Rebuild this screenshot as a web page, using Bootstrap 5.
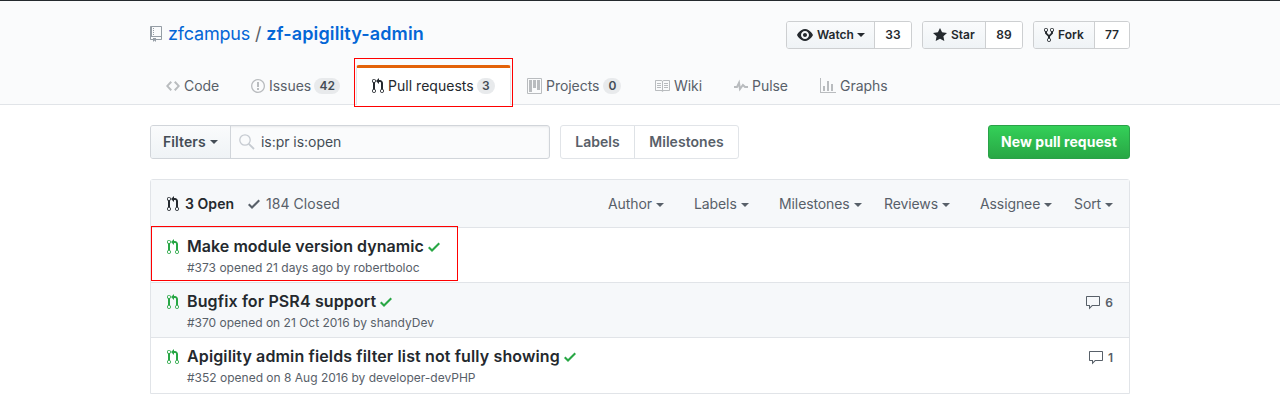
<!DOCTYPE html>
<html lang="en">
<head>
<meta charset="utf-8">
<meta name="viewport" content="width=device-width, initial-scale=1">
<title>Pull requests · zfcampus/zf-apigility-admin</title>
<link href="https://cdn.jsdelivr.net/npm/bootstrap@5.3.0/dist/css/bootstrap.min.css" rel="stylesheet">
<style>
body{font:14px/21px Inter,"Liberation Sans",sans-serif;color:#24292e;letter-spacing:-.04px;overflow:hidden;background:#fff}
svg{fill:currentColor;display:block;flex:none}
a{text-decoration:none;color:inherit}
.page{width:980px;margin:0 auto}
.pagehead{background:#fafbfc;border-top:1px solid #24292e;border-bottom:1px solid #e1e4e8;height:105px}
.title-row{height:64px}
.repo-title{font-size:18px;line-height:28px;color:#586069;padding-top:3px;letter-spacing:-.18px}
.repo-title a{color:#0366d6}
.repo-title strong{font-weight:600;letter-spacing:.13px}
.repo-title svg{color:#959da5;margin-right:6px}
.social{gap:10px;padding-top:20px}
.social .btn-group{height:28px;border:1px solid #cdcfd1;border-radius:3px;overflow:hidden;font-size:12px;font-weight:600;line-height:26px;letter-spacing:0}
.social .act{background:linear-gradient(#fafbfc,#eff3f6);padding-left:10px}
.social .cnt{background:#fff;border-left:1px solid #cdcfd1;text-align:center}
.caret{display:inline-block;border:4px solid transparent;border-top-color:currentColor;border-bottom:0;margin-left:4px;vertical-align:middle}
.tabs{height:39px}
.tabs a{height:40px;padding:0 0 2px 15px;color:#586069;border:1px solid transparent;border-top:3px solid transparent;border-bottom:0}
.tabs svg{color:#b9bcbf}
.tabs .current{background:#fff;color:#24292e;border-color:#e36209 #e1e4e8 transparent;border-radius:3px 3px 0 0;letter-spacing:.03px}
.tabs .current svg{color:#24292e}
.pill{font-size:12px;font-weight:600;line-height:16px;height:16px;border-radius:20px;background:#e8eaec;color:#444d56;text-align:center;margin:1px 0 0 3px;letter-spacing:0}
.tools{margin-top:20px;height:34px}
.tools>div{border-radius:3px}
.search{width:400px;border:1px solid #d1d5da;background:#fafbfc;overflow:hidden;box-shadow:inset 0 1px 2px rgba(27,31,35,.075)}
.search b{width:80px;font-weight:600;color:#444d56;background:linear-gradient(#fafbfc,#eff3f6);border-right:1px solid #d1d5da;padding:0 0 1px 12px;letter-spacing:.1px}
.links{margin-left:10px;border:1px solid #e1e4e8;font-weight:600;color:#586069;width:179px;letter-spacing:.04px}
.links a{padding-bottom:2px}
.new-pr{width:142px;background:linear-gradient(#34d058,#28a745);border:1px solid #2aa148;color:#fff;font-weight:700;padding-bottom:2px;letter-spacing:.05px}
.issues{margin-top:20px;border:1px solid #e1e4e8;border-radius:3px 3px 0 0;height:215px}
.head-row{height:48px;background:#f6f8fa;border-bottom:1px solid #e1e4e8;color:#586069;padding-left:16px}
.filters{letter-spacing:-.1px}
.issue{height:55px;border-bottom:1px solid #e1e4e8;padding:7px 16px 0}
.issue:last-of-type{border-bottom:0}
.issue.alt{background:#f6f8fa}
.issue .pr{color:#28a745;margin:4px 8px 0 0}
.issue h4{font-size:16px;line-height:22px;font-weight:600;margin:0;letter-spacing:.13px}
.issue h4 svg{color:#28a745;margin-top:2px}
.issue:first-of-type h4{letter-spacing:.04px}
.issue p{font-size:12px;line-height:18px;color:#586069;margin:2px 0 0;letter-spacing:0}
.talk{color:#586069;font-size:12px;font-weight:600;gap:4px;height:22px;margin-top:1px}
.talk svg{margin-top:2px}
.marker{border:1px solid #f00;position:absolute;pointer-events:none}
</style>
</head>
<body>
<svg class="d-none">
<symbol id="pr" viewBox="0 0 12 16"><path fill-rule="evenodd" d="M11 11.28V5c-.03-.78-.34-1.47-.94-2.06C9.46 2.35 8.78 2.03 8 2H7V0L4 3l3 3V4h1c.27.02.48.11.69.31.21.2.3.42.31.69v6.28A1.993 1.993 0 0 0 10 15a1.993 1.993 0 0 0 1-3.72zm-1 2.92c-.66 0-1.2-.55-1.2-1.2 0-.65.55-1.2 1.2-1.2.65 0 1.2.55 1.2 1.2 0 .65-.55 1.2-1.2 1.2zM4 3c0-1.11-.89-2-2-2a1.993 1.993 0 0 0-1 3.72v6.56A1.993 1.993 0 0 0 2 15a1.993 1.993 0 0 0 1-3.72V4.72c.59-.34 1-.98 1-1.72zm-.8 10c0 .66-.55 1.2-1.2 1.2-.65 0-1.2-.55-1.2-1.2 0-.65.55-1.2 1.2-1.2.65 0 1.2.55 1.2 1.2zM2 4.2C1.34 4.2.8 3.65.8 3c0-.65.55-1.2 1.2-1.2.65 0 1.2.55 1.2 1.2 0 .65-.55 1.2-1.2 1.2z"/></symbol>
<symbol id="check" viewBox="0 0 12 16"><path d="M12 5l-8 8-4-4 1.5-1.5L4 10l6.5-6.5z"/></symbol>
<symbol id="talk" viewBox="0 0 16 16"><path fill-rule="evenodd" d="M14 1H2c-.55 0-1 .45-1 1v8c0 .55.45 1 1 1h2v3.5L7.5 11H14c.55 0 1-.45 1-1V2c0-.55-.45-1-1-1zm0 9H7l-2 2v-2H2V2h12v8z"/></symbol>
</svg>
<header class="pagehead">
<div class="page position-relative">
<div class="title-row d-flex justify-content-between align-items-start">
<div class="repo-title d-flex align-items-center mt-3"><svg width="12" height="16" viewBox="0 0 12 16"><path fill-rule="evenodd" d="M4 9H3V8h1v1zm0-3H3v1h1V6zm0-2H3v1h1V4zm0-2H3v1h1V2zm8-1v12c0 .55-.45 1-1 1H6v2l-1.500-1.500L3 16v-2H1c-.55 0-1-.45-1-1V1c0-.55.45-1 1-1h10c.55 0 1 .45 1 1zm-1 10H1v2h2v-1h3v1h5v-2zm0-10H2v9h9V1z"/></svg><div><a href="#" class="owner">zfcampus</a> <span>/</span> <a href="#"><strong>zf-apigility-admin</strong></a></div></div>
<div class="social d-flex">
<div class="btn-group"><div class="act d-flex align-items-center" style="width:87px"><svg width="16" height="16" viewBox="0 0 16 16"><path fill-rule="evenodd" d="M8.060 2C3 2 0 8 0 8s3 6 8.060 6C13 14 16 8 16 8s-3-6-7.940-6zM8 12c-2.200 0-4-1.780-4-4 0-2.200 1.800-4 4-4 2.220 0 4 1.800 4 4 0 2.220-1.780 4-4 4zm2-4c0 1.110-.89 2-2 2-1.110 0-2-.89-2-2 0-1.110.89-2 2-2 1.110 0 2 .89 2 2z"/></svg><span class="ms-1">Watch</span><i class="caret" style="margin-left:3px"></i></div><div class="cnt" style="width:37px">33</div></div>
<div class="btn-group"><div class="act d-flex align-items-center" style="width:62px"><svg width="14" height="16" viewBox="0 0 14 16"><path d="M14 6l-4.900-.64L7 1 4.900 5.360 0 6l3.600 3.260L2.670 14 7 11.670 11.330 14l-.93-4.740z"/></svg><span class="ms-1">Star</span></div><div class="cnt" style="width:37px">89</div></div>
<div class="btn-group"><div class="act d-flex align-items-center" style="width:60px"><svg width="10" height="16" viewBox="0 0 10 16"><path fill-rule="evenodd" d="M8 1a1.993 1.993 0 0 0-1 3.720V6L5 8 3 6V4.720A1.993 1.993 0 0 0 2 1a1.993 1.993 0 0 0-1 3.720V6.500l3 3v1.780A1.993 1.993 0 0 0 5 15a1.993 1.993 0 0 0 1-3.720V9.500l3-3V4.720A1.993 1.993 0 0 0 8 1zM2 4.200C1.340 4.200.8 3.650.8 3c0-.65.55-1.200 1.200-1.200.65 0 1.200.55 1.200 1.200 0 .65-.55 1.200-1.200 1.200zm3 10c-.66 0-1.200-.55-1.200-1.200 0-.65.55-1.200 1.200-1.200.65 0 1.200.55 1.200 1.200 0 .65-.55 1.200-1.200 1.200zm3-10c-.66 0-1.200-.55-1.200-1.200 0-.65.55-1.200 1.200-1.200.65 0 1.200.55 1.200 1.200 0 .65-.55 1.200-1.200 1.200z"/></svg><span class="ms-1">Fork</span></div><div class="cnt" style="width:35px">77</div></div>
</div>
</div>
<nav class="tabs d-flex">
<a href="#" class="d-flex align-items-center" style="width:85px"><svg width="14" height="16" viewBox="0 0 14 16"><path d="M9.500 3L8 4.500 11.500 8 8 11.500 9.500 13 14 8 9.500 3zm-5 0L0 8l4.500 5L6 11.500 2.500 8 6 4.500 4.500 3z"/></svg><span class="ms-1">Code</span></a>
<a href="#" class="d-flex align-items-center" style="width:121px"><svg width="14" height="16" viewBox="0 0 14 16"><path fill-rule="evenodd" d="M7 2.300c3.140 0 5.700 2.560 5.700 5.700s-2.560 5.700-5.700 5.700A5.710 5.710 0 0 1 1.300 8c0-3.140 2.560-5.700 5.700-5.700zM7 1C3.140 1 0 4.140 0 8s3.140 7 7 7 7-3.140 7-7-3.140-7-7-7zm1 3H6v5h2V4zm0 6H6v2h2v-2z"/></svg><span class="ms-1">Issues</span><span class="pill" style="width:26px">42</span></a>
<a href="#" class="current d-flex align-items-center" style="width:155px"><svg width="12" height="16"><use href="#pr"/></svg><span class="ms-1">Pull requests</span><span class="pill" style="width:18px">3</span></a>
<a href="#" class="d-flex align-items-center" style="width:127px"><svg width="15" height="16" viewBox="0 0 15 16"><path fill-rule="evenodd" d="M10 12h3V2h-3v10zm-4-2h3V2H6v8zm-4 4h3V2H2v12zm-1 1h13V1H1v14zM14 0H1a1 1 0 0 0-1 1v14a1 1 0 0 0 1 1h13a1 1 0 0 0 1-1V1a1 1 0 0 0-1-1z"/></svg><span class="ms-1">Projects</span><span class="pill" style="width:18px;margin-left:4px">0</span></a>
<a href="#" class="d-flex align-items-center" style="width:80px"><svg width="16" height="16" viewBox="0 0 16 16"><path fill-rule="evenodd" d="M3 5h4v1H3V5zm0 3h4V7H3v1zm0 2h4V9H3v1zm11-5h-4v1h4V5zm0 2h-4v1h4V7zm0 2h-4v1h4V9zm2-6v9c0 .55-.45 1-1 1H9.500l-1 1-1-1H2c-.55 0-1-.45-1-1V3c0-.55.45-1 1-1h5.500l1 1 1-1H15c.55 0 1 .45 1 1zm-8 .5L7.500 3H2v9h6V3.500zm7-.5H9.500l-.5.5V12h6V3z"/></svg><span class="ms-1">Wiki</span></a>
<a href="#" class="d-flex align-items-center" style="width:86px"><svg width="14" height="16" viewBox="0 0 14 16"><path d="M11.500 8L8.800 5.400 6.600 8.500 5.500 1.600 2.380 8H0v2h3.600l.9-1.800.9 5.400L9 8.500l1.600 1.500H14V8h-2.500z"/></svg><span class="ms-1">Pulse</span></a>
<a href="#" class="d-flex align-items-center"><svg width="16" height="16" viewBox="0 0 16 16"><path d="M16 14v1H0V0h1v14h15zM5 13H3V8h2v5zm4 0H7V3h2v10zm4 0h-2V6h2v7z"/></svg><span class="ms-1">Graphs</span></a>
</nav>
<div class="marker" style="left:204px;top:57px;width:159px;height:49px"></div>
</div>
</header>
<main class="page">
<div class="tools d-flex">
<div class="search d-flex align-items-stretch"><b class="d-flex align-items-center">Filters<i class="caret"></i></b><span class="d-flex align-items-center" style="color:#444d56;padding-bottom:2px"><svg width="16" height="16" viewBox="0 0 16 16" style="margin:1px 6px 0 8px" fill="none" stroke="#c6cbd1" stroke-width="1.300"><circle cx="6" cy="6" r="5.200" fill="none"/><path d="M9.800 9.800L15 15" stroke-width="1.800"/></svg>is:pr is:open</span></div>
<div class="links d-flex align-items-stretch"><a href="#" class="d-flex align-items-center justify-content-center border-end" style="width:74px">Labels</a><a href="#" class="d-flex align-items-center justify-content-center flex-fill">Milestones</a></div>
<div class="new-pr ms-auto d-flex align-items-center justify-content-center">New pull request</div>
</div>
<section class="issues position-relative">
<div class="head-row d-flex align-items-center">
<svg width="12" height="16" style="color:#24292e"><use href="#pr"/></svg><span class="fw-semibold" style="color:#24292e;width:69px;padding-left:6px;letter-spacing:.05px">3 Open</span><svg width="12" height="16"><use href="#check"/></svg><span style="padding-left:6px;letter-spacing:.05px">184 Closed</span>
<div class="filters d-flex ms-auto"><span style="width:86px">Author<i class="caret"></i></span><span style="width:85px">Labels<i class="caret"></i></span><span style="width:105px">Milestones<i class="caret"></i></span><span style="width:96px">Reviews<i class="caret"></i></span><span style="width:94px">Assignee<i class="caret"></i></span><span style="width:55px">Sort<i class="caret"></i></span></div>
</div>
<article class="issue d-flex align-items-start"><svg class="pr" width="12" height="16"><use href="#pr"/></svg><div><h4 class="d-flex align-items-center gap-1">Make module version dynamic<svg width="12" height="16"><use href="#check"/></svg></h4><p>#373 opened 21 days ago by robertboloc</p></div></article>
<article class="issue alt d-flex align-items-start"><svg class="pr" width="12" height="16"><use href="#pr"/></svg><div><h4 class="d-flex align-items-center gap-1">Bugfix for PSR4 support<svg width="12" height="16"><use href="#check"/></svg></h4><p>#370 opened on 21 Oct 2016 by shandyDev</p></div><div class="talk ms-auto d-flex align-items-center"><svg width="16" height="16"><use href="#talk"/></svg>6</div></article>
<article class="issue d-flex align-items-start"><svg class="pr" width="12" height="16"><use href="#pr"/></svg><div><h4 class="d-flex align-items-center gap-1">Apigility admin fields filter list not fully showing<svg width="12" height="16"><use href="#check"/></svg></h4><p>#352 opened on 8 Aug 2016 by developer-devPHP</p></div><div class="talk ms-auto d-flex align-items-center"><svg width="16" height="16"><use href="#talk"/></svg>1</div></article>
<div class="marker" style="left:0;top:46px;width:307px;height:55px"></div>
</section>
</main>
<script src="https://cdn.jsdelivr.net/npm/bootstrap@5.3.0/dist/js/bootstrap.bundle.min.js"></script>
</body>
</html>
